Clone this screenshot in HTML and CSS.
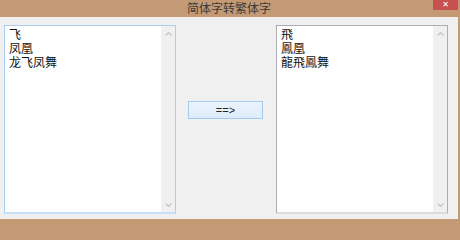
FILE: index.html
```html
<!DOCTYPE html>
<html lang="zh">
<head>
<meta charset="utf-8">
<title>简体字转繁体字</title>
<link rel="stylesheet" href="styles.css">
</head>
<body>
<div class="window">
  <div class="titlebar">
    <span class="title">简体字转繁体字</span>
    <span class="close">✕</span>
  </div>
  <div class="client">
    <div class="textbox focused">
      <div class="text">飞<br>凤凰<br>龙飞凤舞</div>
      <div class="scrollbar">
        <svg class="arrow" width="7" height="4" viewBox="0 0 7 4"><polyline points="0.5,3.5 3.5,0.5 6.5,3.5" fill="none" stroke="#c4c4c4" stroke-width="1.2"/></svg>
        <svg class="arrow" width="7" height="4" viewBox="0 0 7 4"><polyline points="0.5,0.5 3.5,3.5 6.5,0.5" fill="none" stroke="#c4c4c4" stroke-width="1.2"/></svg>
      </div>
    </div>
    <button class="convert">==&gt;</button>
    <div class="textbox">
      <div class="text">飛<br>鳳凰<br>龍飛鳳舞</div>
      <div class="scrollbar">
        <svg class="arrow" width="7" height="4" viewBox="0 0 7 4"><polyline points="0.5,3.5 3.5,0.5 6.5,3.5" fill="none" stroke="#c4c4c4" stroke-width="1.2"/></svg>
        <svg class="arrow" width="7" height="4" viewBox="0 0 7 4"><polyline points="0.5,0.5 3.5,3.5 6.5,0.5" fill="none" stroke="#c4c4c4" stroke-width="1.2"/></svg>
      </div>
    </div>
  </div>
</div>
</body>
</html>
```
FILE: styles.css
```css
html, body {
  margin: 0;
  padding: 0;
}
body {
  width: 460px;
  height: 222px;
  background: #c49a74;
  overflow: hidden;
  font-family: "Noto Sans CJK SC", "Noto Sans", sans-serif;
}
.window {
  width: 460px;
  height: 222px;
  display: flex;
  flex-direction: column;
}
.titlebar {
  height: 17px;
  display: flex;
  justify-content: center;
  align-items: flex-start;
  position: relative;
}
.title {
  font-size: 12px;
  line-height: 15px;
  color: #3a3a3a;
  margin-left: -2px;
}
.close {
  position: absolute;
  right: 2px;
  top: 0;
  width: 25px;
  height: 10px;
  background: #c75050;
  color: #fff;
  font-family: "DejaVu Sans", sans-serif;
  font-size: 8px;
  font-weight: bold;
  line-height: 10px;
  text-align: center;
}
.client {
  width: 458px;
  height: 202px;
  background: #f0f0f0;
  display: flex;
  align-items: flex-start;
  padding: 8px 0 0 4px;
  box-sizing: border-box;
}
.textbox {
  width: 172px;
  height: 189px;
  box-sizing: border-box;
  background: #fff;
  border: 1px solid #abadb3;
  border-bottom: 2px solid #dcdcdc;
  display: flex;
}
.textbox.focused {
  border-color: #a9cef1;
  border-bottom-color: #c8e0f6;
}
.text {
  flex: 1;
  padding: 1px 0 0 4px;
  font-size: 12px;
  line-height: 14px;
  color: #111;
}
.scrollbar {
  width: 14px;
  background: #f0f0f0;
  display: flex;
  flex-direction: column;
  justify-content: space-between;
  align-items: center;
  padding: 6px 0 5px;
  box-sizing: border-box;
}
.arrow {
  display: block;
}
.convert {
  margin: 76px 13px 0 12px;
  width: 75px;
  height: 18px;
  padding: 0;
  border: 1px solid #a3cbf0;
  background: linear-gradient(#ecf4fc, #dcecfc);
  font-family: "Liberation Sans", sans-serif;
  font-size: 11px;
  color: #222;
  line-height: 16px;
}
```
